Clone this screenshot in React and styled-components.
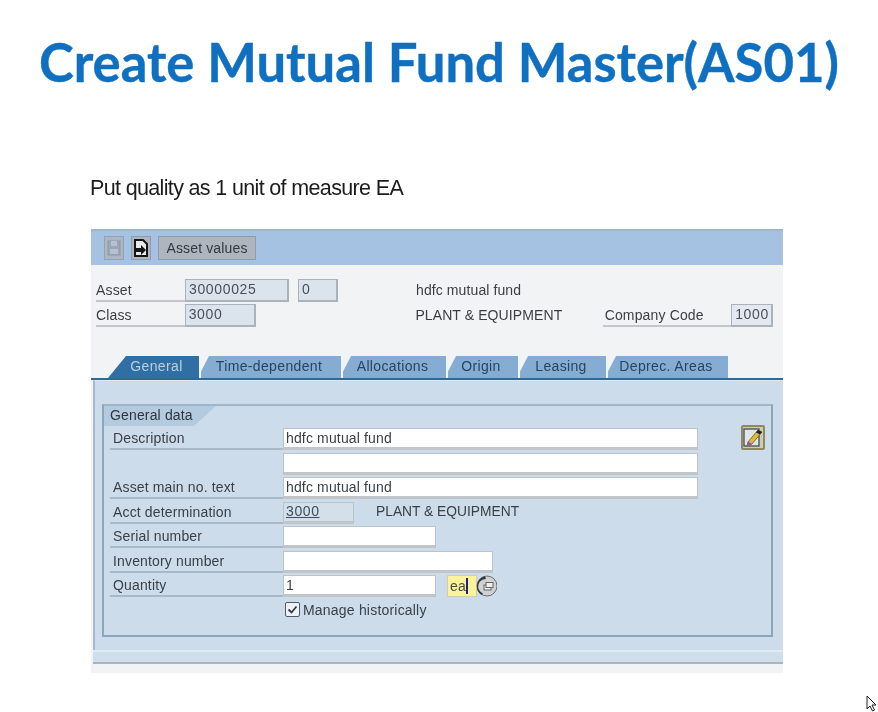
import React from 'react'
import styled, { createGlobalStyle } from 'styled-components'

const Global = createGlobalStyle`
  html, body { margin: 0; padding: 0; background: #fff; }
  body { width: 878px; height: 712px; overflow: hidden; font-family: "Liberation Sans", Arial, sans-serif; }
`

const Page = styled.div`
  width: 878px;
  height: 712px;
  position: relative;
  overflow: hidden;
  background: #fff;
  filter: blur(0.4px);
`

const Title = styled.h1`
  margin: 0;
  padding: 31px 0 0 39px;
  height: 100px;
  box-sizing: border-box;
  font: 700 52.6px/62px "Lato", sans-serif;
  letter-spacing: 0px;
  -webkit-text-stroke: 0.4px #0f6fc0;
  color: #0f6fc0;
  white-space: nowrap;
`

const Note = styled.p`
  margin: 0;
  padding: 76px 0 0 90px;
  height: 53px;
  font: 400 21.5px/24px "Liberation Sans", sans-serif;
  letter-spacing: -0.65px;
  color: #1c1c1c;
`

const Panel = styled.div`
  margin-left: 91px;
  width: 692px;
  height: 444px;
  display: flex;
  flex-direction: column;
  background: #f2f3f5;
  color: #3a3f44;
  font-size: 14px;
  letter-spacing: 0.15px;
`

const Toolbar = styled.div`
  height: 34px;
  border-top: 2px solid #9fb8c8;
  background: #a5c2e3;
  display: flex;
  align-items: center;
  gap: 7px;
  padding-left: 13px;
`

const ToolButton = styled.div`
  width: ${p => p.$w || 20}px;
  height: 24px;
  box-sizing: border-box;
  border: 1px solid #8e9cad;
  background: #aeb5bf;
  display: flex;
  align-items: center;
  justify-content: center;
  color: #33393f;
  font-size: 14px;
  opacity: ${p => (p.$dim ? 0.8 : 1)};
`

const Header = styled.div`
  height: 91px;
  box-sizing: border-box;
  padding: 14px 10px 0 5px;
  display: flex;
  flex-direction: column;
  gap: 2px;
`

const HeadRow = styled.div`
  height: 23px;
  display: flex;
  align-items: stretch;
`

const HeadLabel = styled.div`
  width: ${p => p.$w || 89}px;
  box-sizing: border-box;
  border-bottom: 2px solid #c3c7cb;
  line-height: 23px;
  padding-left: ${p => p.$pad || 0}px;
  white-space: nowrap;
`

const ReadField = styled.div`
  width: ${p => p.$w}px;
  margin-left: ${p => p.$ml || 0}px;
  height: 23px;
  box-sizing: border-box;
  border: 1px solid #aab3bc;
  border-right-width: 2px;
  border-bottom-width: 2px;
  background: ${p => p.$bg || '#dbe3ec'};
  padding-left: 3px;
  line-height: 19px;
  letter-spacing: 0.65px;
  color: #4a5058;
  white-space: nowrap;
`

const HeadText = styled.div`
  width: ${p => p.$w}px;
  margin-left: ${p => p.$ml || 0}px;
  line-height: 22px;
  letter-spacing: 0.1px;
  white-space: nowrap;
`

const TabStrip = styled.div`
  height: 22px;
  padding-left: 17px;
  display: flex;
  gap: 2px;
  border-bottom: 2px solid #2f6a94;
`

const Tab = styled.div`
  width: ${p => p.$w}px;
  height: 22px;
  background: ${p => (p.$active ? '#2f6fa3' : '#85add4')};
  color: ${p => (p.$active ? '#b9cfe2' : '#29445f')};
  clip-path: polygon(${p => (p.$active ? 18 : 8)}px 0, 100% 0, 100% 100%, 0 100%, 0 ${p => (p.$active ? 100 : 70)}%);
  line-height: 21px;
  text-align: center;
  letter-spacing: 0.35px;
  padding: ${p => (p.$active ? '0 0 0 6px' : '0 4px 0 0')};
  box-sizing: border-box;
  white-space: nowrap;
`

const Content = styled.div`
  height: 284px;
  box-sizing: border-box;
  background: #cddcea;
  margin-left: 2px;
  border-left: 2px solid #a6bacb;
  border-top: 1px solid #dbe7f2;
  padding: 23px 10px 0 7px;
  display: flex;
  flex-direction: column;
`

const Group = styled.div`
  height: 233px;
  flex: none;
  box-sizing: border-box;
  border: 2px solid #8ba6ba;
  display: flex;
  flex-direction: column;
  border-top-color: #9db6c9;
`

const GroupTitle = styled.div`
  width: 112px;
  height: 20px;
  background: #b4cade;
  clip-path: polygon(0 0, 100% 0, 90px 100%, 0 100%);
  padding-left: 6px;
  box-sizing: border-box;
  line-height: 18px;
  color: #30363c;
`

const Rows = styled.div`
  padding: 2px 0 0 6px;
  display: flex;
  flex-direction: column;
`

const Row = styled.div`
  height: 24.5px;
  display: flex;
  align-items: flex-start;
`

const Label = styled.div`
  width: 173px;
  height: 22px;
  box-sizing: border-box;
  border-bottom: 2px solid ${p => (p.$blank ? 'transparent' : '#a7b8c7')};
  padding-left: 3px;
  line-height: 20px;
  color: #3a4149;
  white-space: nowrap;
`

const Input = styled.div`
  width: ${p => p.$w}px;
  height: 22px;
  box-sizing: border-box;
  background: ${p => p.$bg || '#fff'};
  border: 1px solid #bcc4cb;
  border-bottom: 3px solid #c2c5c8;
  padding-left: 2px;
  line-height: 19px;
  color: #3a3f44;
  white-space: nowrap;
  display: flex;
  align-items: center;
`

const Linked = styled.span`
  text-decoration: underline;
  letter-spacing: 0.6px;
  color: #3d4f66;
`

const PlainText = styled.div`
  margin-left: 22px;
  line-height: 20px;
  letter-spacing: 0;
  font-size: 13.8px;
  white-space: nowrap;
`

const EditButton = styled.div`
  width: 24px;
  height: 25px;
  margin: -3px 0 0 43px;
  box-sizing: border-box;
  border: 2px solid #8d8a62;
  border-radius: 2px;
  background: #c9cfb6;
  display: flex;
  align-items: center;
  justify-content: center;
`

const Caret = styled.span`
  width: 2px;
  height: 16px;
  background: #1f1f8f;
`

const Unit = styled.div`
  width: 30px;
  height: 22px;
  margin-left: 11px;
  box-sizing: border-box;
  background: #fbf29a;
  border: 1px solid #cfd0a8;
  display: flex;
  align-items: center;
  padding-left: 2px;
  letter-spacing: 0.3px;
  color: #4d5030;
`

const Picker = styled.div`
  width: 21px;
  height: 22px;
  margin-left: -1px;
  display: flex;
`

const CheckRow = styled.div`
  margin-left: 173px;
  padding-left: 2px;
  height: 20px;
  display: flex;
  align-items: center;
  gap: 3px;
  color: #3a4149;
  letter-spacing: 0.2px;
`

const CheckBox = styled.div`
  width: 15px;
  height: 15px;
  box-sizing: border-box;
  border: 1.5px solid #4f5a66;
  border-radius: 2px;
  background: #eef2f6;
  display: flex;
  align-items: center;
  justify-content: center;
`

const Footer = styled.div`
  margin: 13px -10px 0 -9px;
  height: 10px;
  flex: none;
  background: #cfdeeb;
  border-top: 2px solid #dfeaf4;
  border-bottom: 2px solid #a9b6c2;
`

const Cursor = styled.svg`
  position: absolute;
  left: 866px;
  top: 695px;
`

const tabs = [
  ['General', 91],
  ['Time-dependent', 140],
  ['Allocations', 103],
  ['Origin', 70],
  ['Leasing', 86],
  ['Deprec. Areas', 120],
]

const SaveIcon = () => (
  <svg width="14" height="16" viewBox="0 0 14 16">
    <rect x="1" y="1" width="12" height="14" fill="#98a1ab" stroke="#868f9a" />
    <rect x="4" y="1" width="6" height="5" fill="#bcc3ca" />
    <rect x="3" y="9" width="8" height="5" fill="#bcc3ca" />
  </svg>
)

const DocIcon = () => (
  <svg width="16" height="18" viewBox="0 0 16 18">
    <path d="M2 1h8l4 4v12H2z" fill="#e8e8e8" stroke="#161616" strokeWidth="2" />
    <path d="M3 9h5V6l5 5-5 5v-3H3z" fill="#161616" />
  </svg>
)

const PencilIcon = () => (
  <svg width="20" height="21" viewBox="0 0 20 21">
    <rect x="1" y="2" width="15" height="17" fill="#dfe6ea" stroke="#555" strokeWidth="1.4" />
    <path d="M5 15L15 3l4 2-10 12-5 2z" fill="#e2b93c" stroke="#6a5a20" strokeWidth=".8" />
    <path d="M9 17l-5 2 1-5z" fill="#8a5fb0" />
    <path d="M15 3l4 2-2 2.500-4-2z" fill="#222" />
  </svg>
)

const PickerIcon = () => (
  <svg width="21" height="22" viewBox="0 0 21 22">
    <circle cx="11" cy="11" r="10" fill="#cfd1d3" stroke="#6a6e73" strokeWidth="1" />
    <path d="M1 11A10 10 0 0 1 9 1.200L10 4A7.500 7.500 0 0 0 7 18.500L5.500 20A10 10 0 0 1 1 11z" fill="#34373b" />
    <rect x="8" y="10" width="7" height="5" fill="#eee" stroke="#666" />
    <rect x="10" y="7.500" width="7" height="5" fill="#eee" stroke="#666" />
  </svg>
)

export default function App() {
  return (
    <Page>
      <Global />
      <Title>Create Mutual Fund Master(AS01)</Title>
      <Note>Put quality as 1 unit of measure EA</Note>
      <Panel>
        <Toolbar>
          <ToolButton $dim><SaveIcon /></ToolButton>
          <ToolButton><DocIcon /></ToolButton>
          <ToolButton $w={98}>Asset values</ToolButton>
        </Toolbar>
        <Header>
          <HeadRow>
            <HeadLabel>Asset</HeadLabel>
            <ReadField $w={104}>30000025</ReadField>
            <ReadField $w={40} $ml={9}>0</ReadField>
            <HeadText $w={200} $ml={78}>hdfc mutual fund</HeadText>
          </HeadRow>
          <HeadRow>
            <HeadLabel>Class</HeadLabel>
            <ReadField $w={72}>3000</ReadField>
            <HeadText $w={188} $ml={159}>PLANT &amp; EQUIPMENT</HeadText>
            <HeadLabel $w={129} $pad={2}>Company Code</HeadLabel>
            <ReadField $w={42} $bg="#e4e8f0">1000</ReadField>
          </HeadRow>
        </Header>
        <TabStrip>
          {tabs.map(([name, w], i) => (
            <Tab key={name} $w={w} $active={i === 0}>{name}</Tab>
          ))}
        </TabStrip>
        <Content>
          <Group>
            <GroupTitle>General data</GroupTitle>
            <Rows>
              <Row>
                <Label>Description</Label>
                <Input $w={415}>hdfc mutual fund</Input>
                <EditButton><PencilIcon /></EditButton>
              </Row>
              <Row>
                <Label $blank />
                <Input $w={415} />
              </Row>
              <Row>
                <Label>Asset main no. text</Label>
                <Input $w={415}>hdfc mutual fund</Input>
              </Row>
              <Row>
                <Label>Acct determination</Label>
                <Input $w={71} $bg="#d3dfe9"><Linked>3000</Linked></Input>
                <PlainText>PLANT &amp; EQUIPMENT</PlainText>
              </Row>
              <Row>
                <Label>Serial number</Label>
                <Input $w={153} />
              </Row>
              <Row>
                <Label>Inventory number</Label>
                <Input $w={210} />
              </Row>
              <Row>
                <Label>Quantity</Label>
                <Input $w={153}>1</Input>
                <Unit>ea<Caret /></Unit>
                <Picker><PickerIcon /></Picker>
              </Row>
              <CheckRow>
                <CheckBox>
                  <svg width="11" height="11" viewBox="0 0 11 11">
                    <path d="M1.500 5.500l3 3 5-6" fill="none" stroke="#333b44" strokeWidth="1.800" />
                  </svg>
                </CheckBox>
                Manage historically
              </CheckRow>
            </Rows>
          </Group>
          <Footer />
        </Content>
      </Panel>
      <Cursor width="12" height="17" viewBox="0 0 12 17">
        <path d="M1 1v13l3-3 2.500 5 2-1-2.500-5h4z" fill="#fff" stroke="#222" strokeWidth="1" />
      </Cursor>
    </Page>
  )
}
